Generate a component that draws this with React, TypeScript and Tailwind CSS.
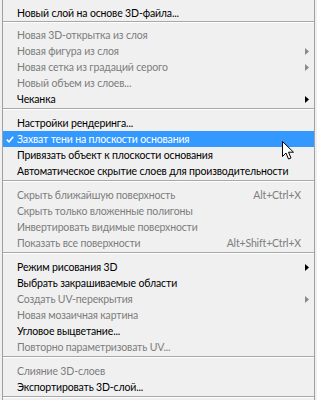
import React from "react";

type Item =
  | { sep: true; first?: boolean }
  | {
      sep?: false;
      label: string;
      disabled?: boolean;
      sub?: boolean;
      shortcut?: string;
      checked?: boolean;
      active?: boolean;
    };

const items: Item[] = [
  { label: "Новый слой на основе 3D-файла..." },
  { sep: true, first: true },
  { label: "Новая 3D-открытка из слоя", disabled: true },
  { label: "Новая фигура из слоя", disabled: true, sub: true },
  { label: "Новая сетка из градаций серого", disabled: true, sub: true },
  { label: "Новый объем из слоев...", disabled: true },
  { label: "Чеканка", sub: true },
  { sep: true },
  { label: "Настройки рендеринга..." },
  { label: "Захват тени на плоскости основания", checked: true, active: true },
  { label: "Привязать объект к плоскости основания" },
  { label: "Автоматическое скрытие слоев для производительности" },
  { sep: true },
  { label: "Скрыть ближайшую поверхность", disabled: true, shortcut: "Alt+Ctrl+X" },
  { label: "Скрыть только вложенные полигоны", disabled: true },
  { label: "Инвертировать видимые поверхности", disabled: true },
  { label: "Показать все поверхности", disabled: true, shortcut: "Alt+Shift+Ctrl+X" },
  { sep: true },
  { label: "Режим рисования 3D", sub: true },
  { label: "Выбрать закрашиваемые области" },
  { label: "Создать UV-перекрытия", disabled: true, sub: true },
  { label: "Новая мозаичная картина", disabled: true },
  { label: "Угловое выцветание..." },
  { label: "Повторно параметризовать UV...", disabled: true },
  { sep: true },
  { label: "Слияние 3D-слоев", disabled: true },
  { label: "Экспортировать 3D-слой..." },
  { sep: true },
];

function Arrow({ gray }: { gray?: boolean }) {
  return (
    <svg width="4" height="7" viewBox="0 0 4 7">
      <path d="M0 0L4 3.5L0 7Z" fill={gray ? "#8a8a8a" : "#000"} />
    </svg>
  );
}

function Check() {
  return (
    <svg width="8" height="7" viewBox="0 0 8 7">
      <path d="M0.8 3.6L3 5.8L7.2 0.8" fill="none" stroke="#fff" strokeWidth="1.6" />
    </svg>
  );
}

// mouse pointer lying over the highlighted row
function Cursor() {
  return (
    <svg width="13" height="20" viewBox="0 0 13 20" className="absolute left-[282px] top-[141px]">
      <path
        d="M0.5 0.5 L0.5 15.5 L4 12 L6.5 18 L9 17 L6.5 11.2 L11.5 11.2 Z"
        fill="#fff"
        stroke="#000"
        strokeWidth="1"
        strokeLinejoin="round"
      />
    </svg>
  );
}

export default function App() {
  return (
    <div className="relative w-[317px] h-[400px] overflow-hidden bg-[#f0f0f0] font-['Lato','Noto_Sans',sans-serif] text-[10.5px] tracking-[-0.15px] leading-[16px]">
      <div className="ml-[2px] w-[313px] h-full border-x border-[#a0a0a0] pt-[5px] flex flex-col">
        {items.map((it, i) =>
          it.sep ? (
            <div key={i} className={it.first ? "h-[6px] shrink-0" : "h-[8px] pt-[1px] shrink-0"}>
              <div className="h-[1px] bg-[#a8a8a8]" />
              <div className="h-[1px] bg-white" />
            </div>
          ) : (
            <div
              key={i}
              className={`h-[16px] shrink-0 flex items-center whitespace-nowrap ${
                it.active
                  ? "bg-[#3399ff] text-white"
                  : it.disabled
                  ? "text-[#7d7d7d]"
                  : "text-black"
              }`}
            >
              <div className="w-[14px] shrink-0 pl-[3px] flex items-center">{it.checked && <Check />}</div>
              <span className="flex-1 min-w-0">{it.label}</span>
              {it.shortcut && <span className="shrink-0">{it.shortcut}</span>}
              <div className="w-[13px] shrink-0 pl-[4px] flex items-center">{it.sub && <Arrow gray={it.disabled} />}</div>
            </div>
          )
        )}
      </div>
      <Cursor />
    </div>
  );
}
